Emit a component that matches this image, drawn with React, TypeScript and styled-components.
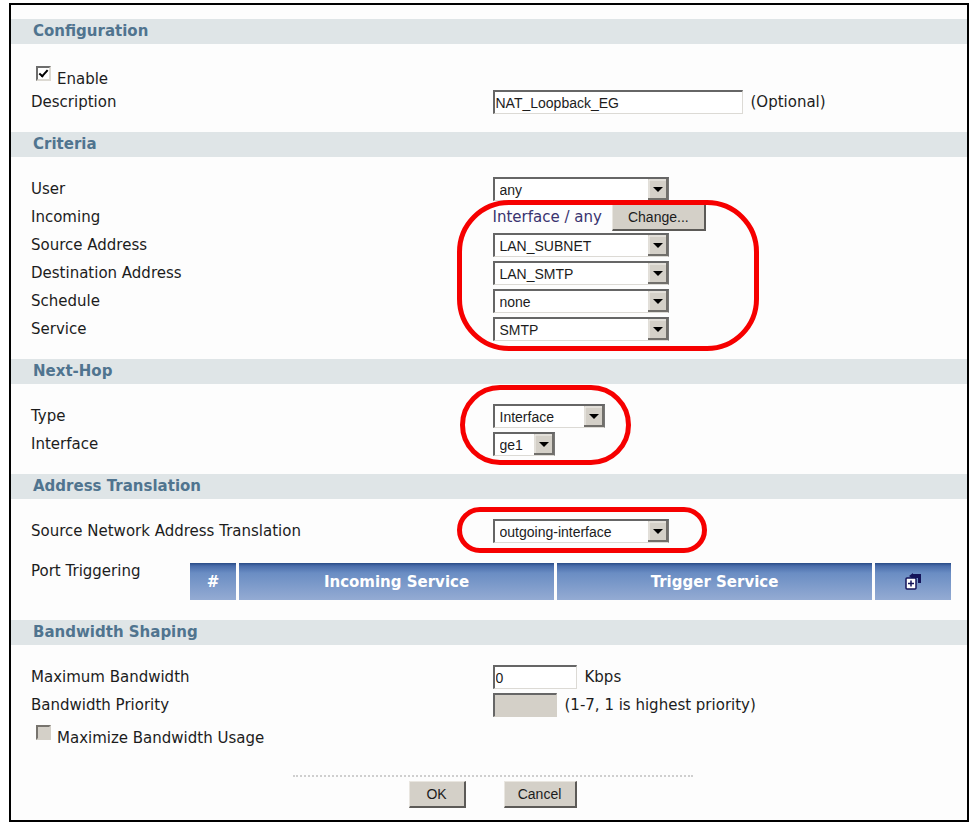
import React from "react";
import styled, { createGlobalStyle } from "styled-components";

const uiFont = `"DejaVu Sans", Verdana, sans-serif`;
const controlFont = `"Liberation Sans", Arial, sans-serif`;

const GlobalStyle = createGlobalStyle`
  *, *::before, *::after { box-sizing: border-box; }
  body {
    margin: 0;
    background: #fff;
    color: #1c1c1c;
    font: 15px/20px ${uiFont};
  }
`;

const Frame = styled.form`
  margin: 3px 4px 0 9px;
  padding-top: 14px;
  padding-bottom: 12px;
  border: 2px solid #000;
  background: #fdfdfd;
`;

const SectionTitle = styled.h2`
  margin: 0;
  padding: 0 22px;
  background: #dfe5e7;
  color: #50748f;
  font-size: 15px;
  font-weight: bold;
  line-height: 25px;
`;

const SectionBody = styled.div<{ $top?: number; $bottom?: number }>`
  padding: ${(p) => p.$top ?? 18}px 13px ${(p) => p.$bottom ?? 16}px 20px;
`;

const Row = styled.div`
  display: grid;
  grid-template-columns: 1fr 1fr;
  align-items: center;
  min-height: 28px;
`;

const CheckRow = styled.label<{ $top: number }>`
  display: flex;
  align-items: flex-start;
  gap: 6px;
  padding: ${(p) => p.$top}px 0 0 5px;
`;

const CheckText = styled.span`
  padding-top: 4px;
  line-height: 18px;
`;

const Controls = styled.div<{ $gap?: number }>`
  display: flex;
  align-items: center;
  gap: ${(p) => p.$gap ?? 8}px;
`;

const TickBox = styled.input`
  appearance: none;
  flex: none;
  display: grid;
  place-items: center;
  width: 15px;
  height: 15px;
  margin: 0;
  border: 2px solid;
  border-color: #6d6d6d #dcd9d2 #dcd9d2 #6d6d6d;
  background: #fff;

  &:checked::before {
    content: "";
    width: 5px;
    height: 9px;
    margin-bottom: 2px;
    border: solid #000;
    border-width: 0 2px 2px 0;
    transform: rotate(42deg);
  }

  &:disabled {
    border-color: #77746e #d4d0c8 #d4d0c8 #77746e;
    background: #d4d0c8;
  }
`;

const TextBox = styled.input<{ $width: number }>`
  width: ${(p) => p.$width}px;
  height: 24px;
  padding: 0 1px;
  border: solid;
  border-width: 2px 1px 1px 2px;
  border-color: #666 #dcdad5 #dcdad5 #666;
  border-radius: 0;
  background: #fff;
  color: #1c1c1c;
  font: 14px/20px ${controlFont};

  &:disabled {
    border-color: #666 #d4d0c8 #d4d0c8 #666;
    background: #d4d0c8;
  }
`;

const PickerBox = styled.span<{ $width: number }>`
  position: relative;
  display: block;
  width: ${(p) => p.$width}px;
`;

const Picker = styled.select`
  appearance: none;
  display: block;
  width: 100%;
  height: 24px;
  padding: 0 22px 0 5px;
  border: solid;
  border-width: 2px 1px 1px 2px;
  border-color: #666 #777 #dcdad5 #666;
  border-radius: 0;
  background: #fff;
  color: #1c1c1c;
  font: 14px/20px ${controlFont};
`;

const PickerArrow = styled.svg`
  position: absolute;
  top: 2px;
  right: 1px;
  width: 20px;
  height: 21px;
  pointer-events: none;
`;

const PushButton = styled.button<{ $width: number }>`
  width: ${(p) => p.$width}px;
  height: 27px;
  padding: 0;
  border: solid;
  border-width: 1px 2px 2px 1px;
  border-color: #e9e6e0 #5c5a57 #5c5a57 #e9e6e0;
  border-radius: 0;
  background: #d4d0c8;
  color: #1c1c1c;
  font: 14px/20px ${controlFont};
`;

const InterfaceName = styled.span`
  color: #39336f;
`;

const Highlighted = styled.div`
  position: relative;
`;

const Ring = styled.span<{ $start: number; $width: number; $above: number; $below: number }>`
  position: absolute;
  top: -${(p) => p.$above}px;
  bottom: -${(p) => p.$below}px;
  left: calc(50% - ${(p) => p.$start}px);
  width: ${(p) => p.$width}px;
  border: 5px solid #f60000;
  border-radius: 52px;
  pointer-events: none;
`;

const TriggerRow = styled.div`
  display: grid;
  grid-template-columns: 156px 1fr;
  align-items: start;
  padding: 18px 0 0;
`;

const TriggerLabel = styled.span`
  line-height: 16px;
`;

const TriggerTable = styled.table`
  width: 100%;
  border-collapse: separate;
  border-spacing: 3px 0;
  table-layout: fixed;
`;

const TriggerHead = styled.th<{ $width?: string }>`
  width: ${(p) => p.$width ?? "auto"};
  height: 37px;
  padding: 0;
  background: linear-gradient(#284b86 0, #4a6dab 3px, #6a8dc3 10px, #94abd3 100%);
  color: #fff;
  font-size: 15px;
  line-height: 20px;
`;

const AddButton = styled.button`
  display: block;
  margin: 0 auto;
  padding: 0;
  border: 0;
  background: none;

  svg {
    display: block;
  }
`;

const Footer = styled.footer`
  display: flex;
  justify-content: center;
  gap: 38px;
  width: 400px;
  margin: 28px auto 0;
  padding: 4px 0 0;
  border-top: 2px dotted #cfcfcf;
`;

type ChoiceProps = { id: string; value: string; width?: number; label?: string };

function Choice({ id, value, width = 176 }: ChoiceProps) {
  return (
    <PickerBox $width={width}>
      <Picker id={id} defaultValue={value}>
        <option>{value}</option>
      </Picker>
      <PickerArrow viewBox="0 0 20 21" aria-hidden="true">
        <path d="M0 0h20v21H0z" fill="#d4d0c8" />
        <path d="M1 20V1h18" fill="none" stroke="#f1efeb" />
        <path d="M0 20h19V0" fill="none" stroke="#716f6b" strokeWidth="2" />
        <path d="M5 8h10l-5 5z" fill="#000" />
      </PickerArrow>
    </PickerBox>
  );
}

function ChoiceRow({ label, ...choice }: ChoiceProps) {
  return (
    <Row>
      <label htmlFor={choice.id}>{label}</label>
      <Choice {...choice} />
    </Row>
  );
}

export default function App() {
  return (
    <>
      <GlobalStyle />
      <Frame onSubmit={(e) => e.preventDefault()}>
        <SectionTitle>Configuration</SectionTitle>
        <SectionBody>
          <CheckRow $top={4}>
            <TickBox type="checkbox" defaultChecked />
            <CheckText>Enable</CheckText>
          </CheckRow>
          <Row>
            <label htmlFor="description">Description</label>
            <Controls>
              <TextBox id="description" $width={250} defaultValue="NAT_Loopback_EG" />
              <span>(Optional)</span>
            </Controls>
          </Row>
        </SectionBody>

        <SectionTitle>Criteria</SectionTitle>
        <SectionBody>
          <ChoiceRow id="user" label="User" value="any" />
          <Highlighted>
            <Row>
              <span>Incoming</span>
              <Controls $gap={10}>
                <InterfaceName>Interface / any</InterfaceName>
                <PushButton type="button" $width={94}>Change...</PushButton>
              </Controls>
            </Row>
            <ChoiceRow id="source" label="Source Address" value="LAN_SUBNET" />
            <ChoiceRow id="destination" label="Destination Address" value="LAN_SMTP" />
            <ChoiceRow id="schedule" label="Schedule" value="none" />
            <ChoiceRow id="service" label="Service" value="SMTP" />
            <Ring $start={36} $width={302} $above={3} $below={8} />
          </Highlighted>
        </SectionBody>

        <SectionTitle>Next-Hop</SectionTitle>
        <SectionBody>
          <Highlighted>
            <ChoiceRow id="type" label="Type" value="Interface" width={112} />
            <ChoiceRow id="interface" label="Interface" value="ge1" width={62} />
            <Ring $start={33} $width={171} $above={17} $below={7} />
          </Highlighted>
        </SectionBody>

        <SectionTitle>Address Translation</SectionTitle>
        <SectionBody $bottom={20}>
          <Highlighted>
            <ChoiceRow
              id="snat"
              label="Source Network Address Translation"
              value="outgoing-interface"
            />
            <Ring $start={36} $width={250} $above={10} $below={8} />
          </Highlighted>
          <TriggerRow>
            <TriggerLabel>Port Triggering</TriggerLabel>
            <TriggerTable>
              <thead>
                <tr>
                  <TriggerHead $width="46px">#</TriggerHead>
                  <TriggerHead>Incoming Service</TriggerHead>
                  <TriggerHead>Trigger Service</TriggerHead>
                  <TriggerHead $width="76px">
                    <AddButton type="button" aria-label="Add">
                      <svg width="18" height="18" viewBox="0 0 18 18">
                        <path d="M5 3l4-3v1h8v9h-3V5H9v1z" fill="#14145a" />
                        <rect x="2" y="5" width="10" height="11" rx="1" fill="#fff" stroke="#14145a" strokeWidth="1.500" />
                        <path d="M4 10.500h6M7 7.500v6" stroke="#14145a" strokeWidth="1.500" />
                      </svg>
                    </AddButton>
                  </TriggerHead>
                </tr>
              </thead>
            </TriggerTable>
          </TriggerRow>
        </SectionBody>

        <SectionTitle>Bandwidth Shaping</SectionTitle>
        <SectionBody $bottom={0}>
          <Row>
            <label htmlFor="bandwidth">Maximum Bandwidth</label>
            <Controls>
              <TextBox id="bandwidth" $width={84} defaultValue="0" />
              <span>Kbps</span>
            </Controls>
          </Row>
          <Row>
            <label htmlFor="priority">Bandwidth Priority</label>
            <Controls>
              <TextBox id="priority" $width={64} disabled />
              <span>(1-7, 1 is highest priority)</span>
            </Controls>
          </Row>
          <CheckRow $top={6}>
            <TickBox type="checkbox" disabled />
            <CheckText>Maximize Bandwidth Usage</CheckText>
          </CheckRow>
          <Footer>
            <PushButton type="submit" $width={57}>OK</PushButton>
            <PushButton type="button" $width={73}>Cancel</PushButton>
          </Footer>
        </SectionBody>
      </Frame>
    </>
  );
}
